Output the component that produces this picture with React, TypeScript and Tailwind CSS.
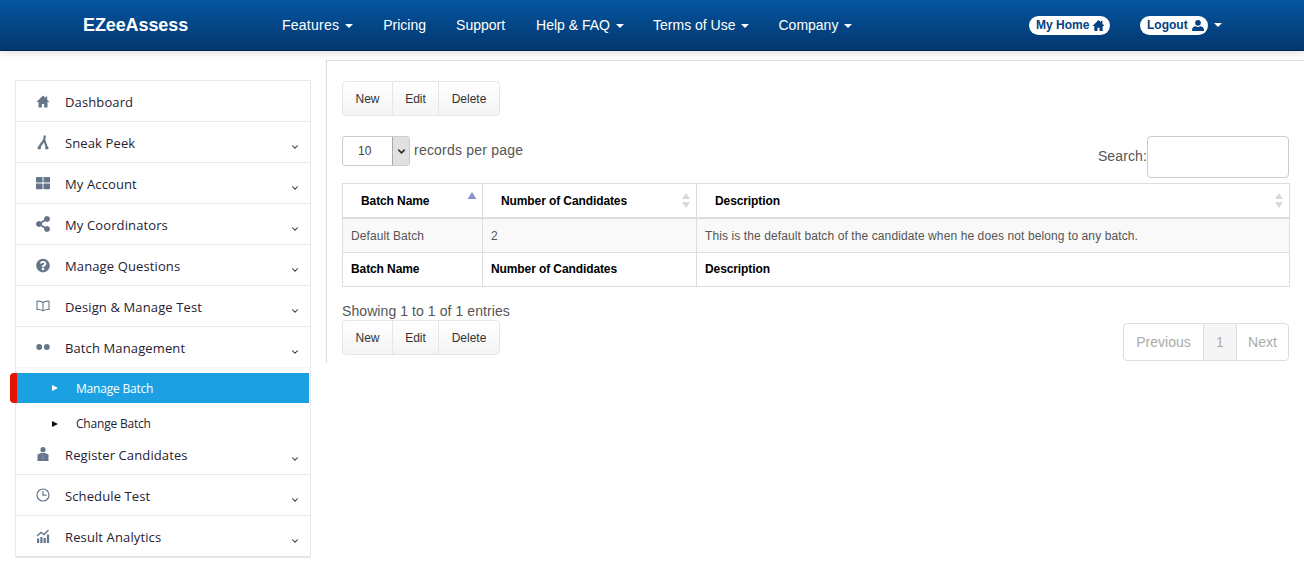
import { FaThLarge, FaShareAlt, FaQuestionCircle } from "react-icons/fa";
import { FiChevronDown } from "react-icons/fi";
import type { ReactNode } from "react";

const navLinks = [
  { label: "Features", caret: true, gap: "mr-[30px] tracking-[0.25px]" },
  { label: "Pricing", caret: false, gap: "mr-[30px]" },
  { label: "Support", caret: false, gap: "mr-[31px]" },
  { label: "Help & FAQ", caret: true, gap: "mr-[29px]" },
  { label: "Terms of Use", caret: true, gap: "mr-[29px]" },
  { label: "Company", caret: true, gap: "mr-0" },
];

const Caret = () => (
  <svg width="8" height="4" viewBox="0 0 8 4" className="ml-[6px]">
    <path d="M0 0h8L4 4z" fill="#fff" />
  </svg>
);

const HomeIcon = ({ size, color }: { size: number; color: string }) => (
  <svg width={size} height={size} viewBox="0 0 14 14" fill={color}>
    <path d="M7 1 0.500 7.500h2V13h3.400V9.500h2.200V13h3.400V7.500h2L11.200 5.200V2H9.600v1.600z" />
  </svg>
);

const UserIcon = ({ color }: { color: string }) => (
  <svg width="14" height="11" viewBox="0 0 15 13" fill={color}>
    <ellipse cx="7.500" cy="3.400" rx="3.300" ry="3.300" />
    <path d="M0.500 13v-1.800c0-2.300 2-3.700 4.300-3.800 1.700 1 3.700 1 5.400 0 2.300.1 4.300 1.500 4.300 3.800V13z" />
  </svg>
);

const SneakIcon = () => (
  <svg width="14" height="15" viewBox="0 0 14 15" fill="none" stroke="#66768a" strokeWidth="2.200">
    <path d="M8.800 0.500 8.200 5 3.500 11.500M8.200 5l2.300 6.500" />
    <circle cx="3.300" cy="12.800" r="1.800" fill="#66768a" stroke="none" />
    <circle cx="10.800" cy="12.800" r="1.800" fill="#66768a" stroke="none" />
  </svg>
);

const BookIcon = () => (
  <svg width="14" height="12" viewBox="0 0 14 12" fill="none" stroke="#66768a" strokeWidth="1.100">
    <path d="M7 2.500C5.800 1.400 3.500 1 1 1.200v8.300c2.500-.2 4.800.2 6 1.300 1.200-1.100 3.500-1.500 6-1.300V1.200C10.500 1 8.200 1.400 7 2.500zM7 2.500v8.300" />
  </svg>
);

const DotsIcon = () => (
  <svg width="14" height="8" viewBox="0 0 14 8" fill="#66768a">
    <circle cx="3.200" cy="4" r="2.900" />
    <circle cx="10.800" cy="4" r="2.900" />
  </svg>
);

const PersonIcon = () => (
  <svg width="12" height="14" viewBox="0 0 12 14" fill="#66768a">
    <circle cx="6" cy="2.700" r="2.600" />
    <path d="M0.500 14V7.500L4 6h4l3.500 1.500V14z" />
    <path d="M6 6.500 5.200 12h1.600z" fill="#8e9bab" />
  </svg>
);

const ClockIcon = () => (
  <svg width="14" height="14" viewBox="0 0 14 14" fill="none" stroke="#66768a" strokeWidth="1.200">
    <circle cx="7" cy="7" r="6" />
    <path d="M7 3v4.200h3.400" />
  </svg>
);

const ChartIcon = () => (
  <svg width="14" height="14" viewBox="0 0 14 14" fill="#66768a">
    <path d="M1 9.500h2.200V14H1zM4.300 8h2.200v6H4.300zM7.600 9h2.200v5H7.600zM10.900 5.500h2.200V14h-2.200z" />
    <path d="M1 7 5 3.500l3 2L12.500 1" fill="none" stroke="#66768a" strokeWidth="1.400" />
  </svg>
);

const menu: { label: string; icon: ReactNode; arrow?: boolean }[] = [
  { label: "Dashboard", icon: <HomeIcon size={15} color="#66768a" /> },
  { label: "Sneak Peek", icon: <SneakIcon />, arrow: true },
  { label: "My Account", icon: <FaThLarge size={14} color="#66768a" />, arrow: true },
  { label: "My Coordinators", icon: <FaShareAlt size={16} color="#66768a" />, arrow: true },
  { label: "Manage Questions", icon: <FaQuestionCircle size={15} color="#66768a" />, arrow: true },
  { label: "Design & Manage Test", icon: <BookIcon />, arrow: true },
  { label: "Batch Management", icon: <DotsIcon />, arrow: true },
];

const menuAfter: { label: string; icon: ReactNode; last?: boolean }[] = [
  { label: "Register Candidates", icon: <PersonIcon /> },
  { label: "Schedule Test", icon: <ClockIcon /> },
  { label: "Result Analytics", icon: <ChartIcon />, last: true },
];

const MenuRow = ({ label, icon, arrow, last, faint }: { label: string; icon: ReactNode; arrow?: boolean; last?: boolean; faint?: boolean }) => (
  <div className={`flex items-center pl-[20px] pr-[11px] ${last ? "h-[42px] border-b-2 border-[#e6e6e6]" : faint ? "h-[41px] border-b border-[#f4f4f4]" : "h-[41px] border-b border-[#e9e9e9]"}`}>
    <span className="mr-[15px] flex w-[14px] shrink-0 justify-center">{icon}</span>
    <span className="flex-1 pt-[3px] font-['Open_Sans',sans-serif] text-[13px] tracking-[0.12px] text-[#1f2233]">{label}</span>
    {arrow && <FiChevronDown size={10} color="#222" strokeWidth={2.5} className="mt-[10px] -mr-px" />}
  </div>
);

const ActionButtons = () => (
  <div className="inline-flex h-[35px] w-[158px] rounded-[4px] border border-[#e6e6e6] bg-gradient-to-b from-white to-[#f4f4f4] text-[12px] text-[#333]">
    <span className="flex w-[50px] items-center justify-center border-r border-[#e6e6e6]">New</span>
    <span className="flex w-[46px] items-center justify-center border-r border-[#e6e6e6]">Edit</span>
    <span className="flex flex-1 items-center justify-center">Delete</span>
  </div>
);

const SortIcon = ({ active }: { active?: boolean }) =>
  active ? (
    <svg width="10" height="8" viewBox="0 0 10 8" className="mt-[8px] self-start">
      <path d="M5 0 9.500 7H.5z" fill="#8a8fd6" />
    </svg>
  ) : (
    <svg width="10" height="15" viewBox="0 0 10 15">
      <path d="M5 0 9 6H1zM5 15 1 9h8z" fill="#d9d9d9" />
    </svg>
  );

export default function App() {
  return (
    <div className="min-h-[563px] bg-white font-['Liberation_Sans',Arial,sans-serif]">
      <header className="relative z-10 flex h-[51px] items-center border-b border-[#02264d] bg-gradient-to-b from-[#04559f] to-[#03376f] pl-[83px] shadow-[0_2px_8px_rgba(0,0,0,0.12)]">
        <span className="w-[199px] text-[18px] font-bold tracking-[-0.1px] text-white">EZeeAssess</span>
        <nav className="flex w-[747px] items-center pt-px text-[14px] text-white">
          {navLinks.map((l) => (
            <span key={l.label} className={`flex items-center ${l.gap}`}>
              {l.label}
              {l.caret && <Caret />}
            </span>
          ))}
        </nav>
        <span className="flex h-[19px] w-[81px] items-center gap-[3px] rounded-full bg-white pl-[7px] text-[12px] font-bold text-[#04427f]">
          My Home <HomeIcon size={13} color="#04427f" />
        </span>
        <span className="ml-[30px] flex h-[19px] w-[68px] items-center gap-[3px] rounded-full bg-white pl-[7px] text-[12px] font-bold text-[#04427f]">
          Logout <UserIcon color="#04427f" />
        </span>
        <Caret />
      </header>

      <div className="flex items-start">
        <aside className="ml-[15px] mt-[29px] w-[296px] border-x border-t border-[#e9e9e9]">
          {menu.map((m, i) => (
            <MenuRow key={m.label} {...m} faint={i === menu.length - 1} />
          ))}
          <div className="relative mx-px mt-[5px] flex h-[30px] items-center bg-[#1ba1e2] pl-[35px] text-white">
            <span className="absolute left-[-7px] top-0 h-[30px] w-[7px] rounded-l-[4px] bg-[#e81300]" />
            <svg width="6" height="6" viewBox="0 0 6 6" className="mr-[18px]">
              <path d="M0 0 6 3 0 6z" fill="#fff" />
            </svg>
            <span className="pt-px font-['Open_Sans',sans-serif] text-[12px] tracking-[-0.2px]">Manage Batch</span>
          </div>
          <div className="ml-px flex h-[31px] items-center pl-[35px] pt-[11px] text-[#1f2233]">
            <svg width="6" height="6" viewBox="0 0 6 6" className="mr-[18px]">
              <path d="M0 0 6 3 0 6z" fill="#111" />
            </svg>
            <span className="font-['Open_Sans',sans-serif] text-[12px] tracking-[-0.2px]">Change Batch</span>
          </div>
          {menuAfter.map((m) => (
            <MenuRow key={m.label} {...m} arrow />
          ))}
        </aside>

        <main className="ml-[15px] mt-[9px] h-[303px] flex-1 border-l border-t border-[#dddddd] pl-[15px] pr-[14px] pt-[20px]">
          <ActionButtons />
          <div className="mt-[20px] flex h-[47px] items-start justify-between pr-px">
            <div className="flex h-[30px] items-center text-[14px] text-[#555]">
              <div className="flex h-[30px] w-[68px] items-center rounded-[3px] border border-[#cccccc] pl-[15px] text-[12px] text-[#444]">
                <span className="flex-1">10</span>
                <span className="flex h-full w-[17px] items-center justify-center rounded-r-[2px] border-l border-[#aaa] bg-[#e1e1e1] text-[#333]">
                  <FiChevronDown size={11} strokeWidth={3.5} />
                </span>
              </div>
              <span className="ml-[4px] pb-[2px] tracking-[0.22px]">records per page</span>
            </div>
            <div className="flex items-center text-[14px] text-[#555]">
              <span className="pb-[2px] tracking-[0.12px]">Search:</span>
              <div className="h-[42px] w-[142px] rounded-[4px] border border-[#cccccc] bg-white" />
            </div>
          </div>

          <div className="grid grid-cols-[140px_214px_1fr] border border-[#dddddd] text-[12px] text-[#555]">
            <div className="flex h-[35px] items-center justify-between border-b-2 border-r border-[#dddddd] pl-[18px] pr-[5px] font-bold tracking-[-0.1px] text-black">
              Batch Name <SortIcon active />
            </div>
            <div className="flex h-[35px] items-center justify-between border-b-2 border-r border-[#dddddd] pl-[18px] pr-[5px] font-bold tracking-[-0.1px] text-black">
              Number of Candidates <SortIcon />
            </div>
            <div className="flex h-[35px] items-center justify-between border-b-2 border-[#dddddd] pl-[18px] pr-[5px] font-bold tracking-[-0.1px] text-black">
              Description <SortIcon />
            </div>
            <div className="flex h-[34px] items-center border-b border-r border-[#dddddd] bg-[#f9f9f9] pl-[8px] tracking-[0.08px]">Default Batch</div>
            <div className="flex h-[34px] items-center border-b border-r border-[#dddddd] bg-[#f9f9f9] pl-[8px]">2</div>
            <div className="flex h-[34px] items-center border-b border-[#dddddd] bg-[#f9f9f9] pl-[8px] tracking-[0.1px]">
              This is the default batch of the candidate when he does not belong to any batch.
            </div>
            <div className="flex h-[33px] items-center border-r border-[#dddddd] pb-[2px] pl-[8px] font-bold tracking-[-0.1px] text-black">Batch Name</div>
            <div className="flex h-[33px] items-center border-r border-[#dddddd] pb-[2px] pl-[8px] font-bold tracking-[-0.1px] text-black">Number of Candidates</div>
            <div className="flex h-[33px] items-center pb-[2px] pl-[8px] font-bold tracking-[-0.1px] text-black">Description</div>
          </div>

          <div className="flex items-start justify-between pr-px">
            <div className="mt-[15px] flex flex-col">
              <span className="text-[14px] leading-[18px] tracking-[0.08px] text-[#555]">Showing 1 to 1 of 1 entries</span>
              <ActionButtons />
            </div>
            <div className="mt-[36px] flex h-[38px] rounded-[4px] border border-[#dddddd] text-[14px] text-[#aaaaaa]">
              <span className="flex w-[80px] items-center justify-center border-r border-[#dddddd]">Previous</span>
              <span className="flex w-[33px] items-center justify-center border-r border-[#dddddd] bg-[#f5f5f5]">1</span>
              <span className="flex w-[51px] items-center justify-center">Next</span>
            </div>
          </div>
        </main>
      </div>
    </div>
  );
}
